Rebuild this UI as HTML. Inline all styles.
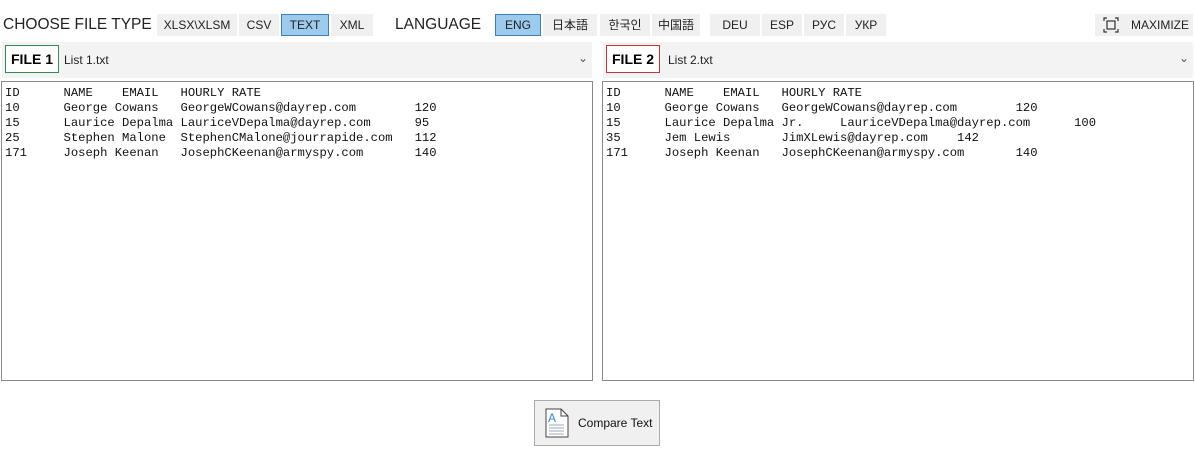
<!DOCTYPE html>
<html><head><meta charset="utf-8"><style>
body{margin:0;width:1195px;height:450px;background:#fff;position:relative;font-family:"Liberation Sans","Noto Sans CJK JP",sans-serif;overflow:hidden}
.a{position:absolute}
.lbl{font-size:15.5px;color:#222;top:16px}
.b{position:absolute;top:14px;height:22px;background:#f0f0f0;font-size:12px;color:#222;line-height:22px;text-align:center;box-sizing:border-box}
.b.on{background:#9ccbee;border:1px solid #3d7fb5;line-height:20px}
.hdr{position:absolute;top:42px;height:36px;background:#f3f3f3}
.tag{position:absolute;top:3px;left:3px;height:28px;box-sizing:border-box;font-weight:bold;font-size:14px;line-height:26px;padding:0 5px;background:#fff}
.fn{position:absolute;top:11px;font-size:12px;color:#222}
.chev{position:absolute;top:9px;font-size:12px;color:#555}
.ta{position:absolute;top:81px;height:300px;border:1px solid #888;box-sizing:border-box;background:#fff}
pre{margin:0;padding:4px 0 0 3px;font-family:"Liberation Mono",monospace;font-size:12.2px;line-height:15px;color:#111}
</style></head><body>
<div class="a lbl" style="left:3px">CHOOSE FILE TYPE</div>
<div class="b" style="left:157px;width:80px">XLSX\XLSM</div>
<div class="b" style="left:239px;width:40px">CSV</div>
<div class="b on" style="left:281px;width:48px">TEXT</div>
<div class="b" style="left:331px;width:42px">XML</div>
<div class="a lbl" style="left:395px">LANGUAGE</div>
<div class="b on" style="left:495px;width:46px">ENG</div>
<div class="b" style="left:543px;width:54px">日本語</div>
<div class="b" style="left:600px;width:50px">한국인</div>
<div class="b" style="left:652px;width:48px">中国語</div>
<div class="b" style="left:710px;width:50px">DEU</div>
<div class="b" style="left:762px;width:40px">ESP</div>
<div class="b" style="left:804px;width:40px">РУС</div>
<div class="b" style="left:846px;width:40px">УКР</div>
<div class="b" style="left:1095px;width:98px;text-align:left;padding-left:36px">MAXIMIZE</div>
<svg class="a" style="left:1103px;top:17px" width="16" height="16" viewBox="0 0 16 16" fill="none" stroke="#333" stroke-width="1.2"><rect x="4" y="4" width="8" height="8"/><path d="M1 4V1h3M12 1h3v3M15 12v3h-3M4 15H1v-3"/></svg>

<div class="hdr" style="left:2px;width:590px">
<div class="tag" style="border:1px solid #2e8b57">FILE 1</div>
<div class="fn" style="left:62px">List 1.txt</div>
<div class="chev" style="left:576px">&#8964;</div></div>
<div class="hdr" style="left:603px;width:590px">
<div class="tag" style="border:1px solid #d03030">FILE 2</div>
<div class="fn" style="left:65px">List 2.txt</div>
<div class="chev" style="left:576px">&#8964;</div></div>

<div class="ta" style="left:1px;width:592px"><pre>ID      NAME    EMAIL   HOURLY RATE
10      George Cowans   GeorgeWCowans@dayrep.com        120
15      Laurice Depalma LauriceVDepalma@dayrep.com      95
25      Stephen Malone  StephenCMalone@jourrapide.com   112
171     Joseph Keenan   JosephCKeenan@armyspy.com       140</pre></div>
<div class="ta" style="left:602px;width:592px"><pre>ID      NAME    EMAIL   HOURLY RATE
10      George Cowans   GeorgeWCowans@dayrep.com        120
15      Laurice Depalma Jr.     LauriceVDepalma@dayrep.com      100
35      Jem Lewis       JimXLewis@dayrep.com    142
171     Joseph Keenan   JosephCKeenan@armyspy.com       140</pre></div>

<div class="a" style="left:534px;top:400px;width:126px;height:46px;background:#f0f0f0;border:1px solid #aaa;box-sizing:border-box">
<svg class="a" style="left:10px;top:7px" width="24" height="30" viewBox="0 0 24 30" fill="none"><path d="M1 1h15l7 7v21H1z" fill="#fff" stroke="#444"/><path d="M16 1v7h7" stroke="#444"/><text x="3" y="14" font-size="12" fill="#3a7fd0" font-family="Liberation Sans">A</text><path d="M4 17h15M4 20h15M4 23h15M4 26h15" stroke="#9ab"/></svg>
<div class="a" style="left:43px;top:15px;font-size:12px;color:#111">Compare Text</div></div>
</body></html>
